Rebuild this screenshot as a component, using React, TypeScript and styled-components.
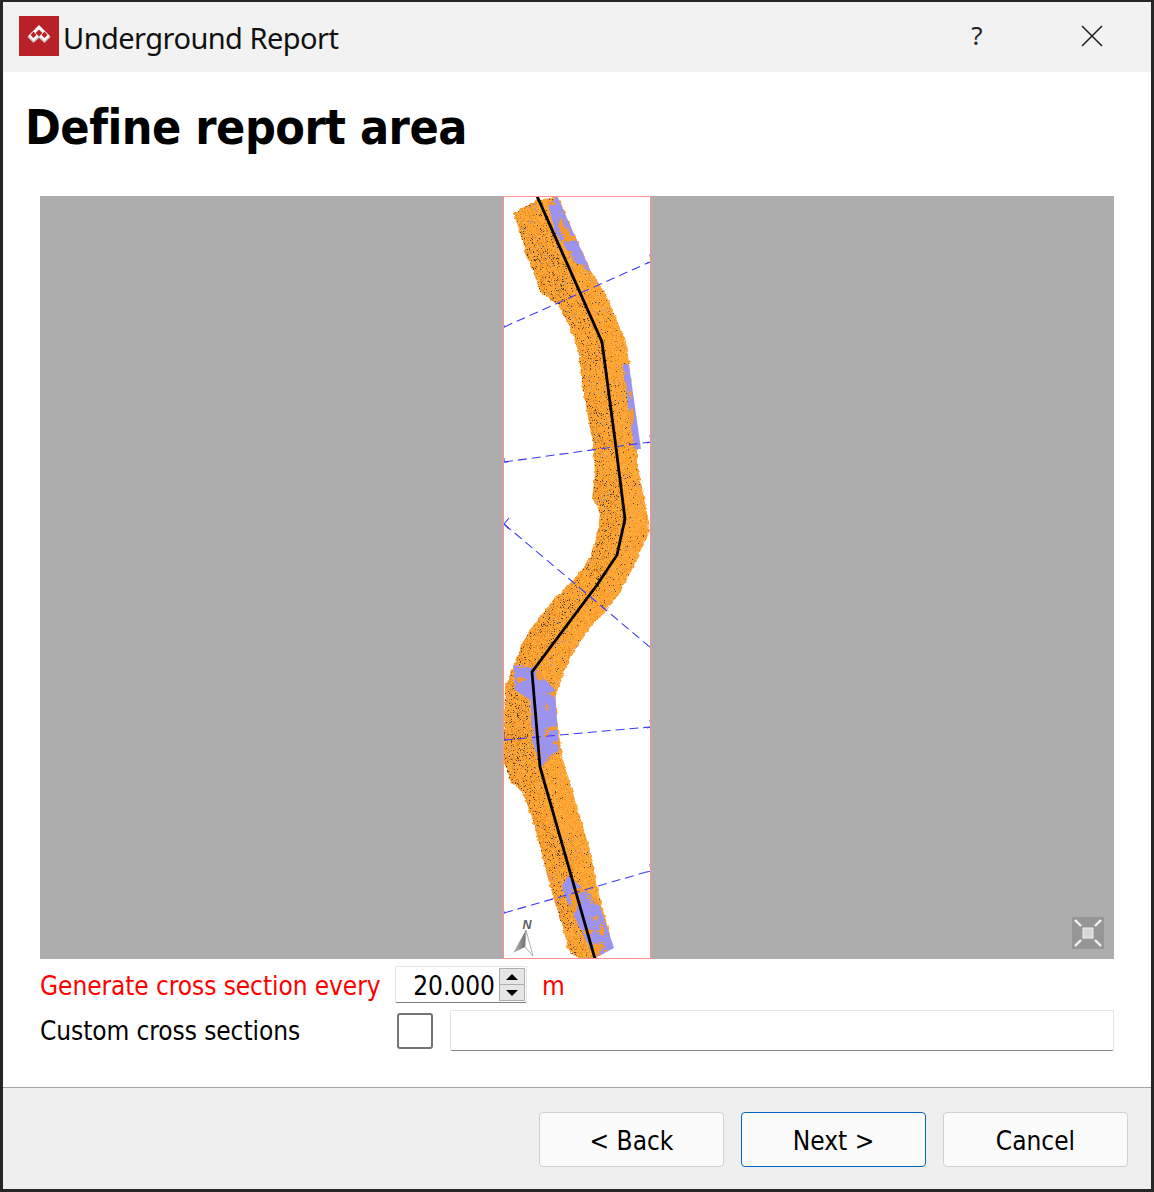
import React, { useMemo } from "react";
import styled, { createGlobalStyle } from "styled-components";

const Global = createGlobalStyle`
  html, body { margin: 0; padding: 0; background: #fff; }
  * { box-sizing: border-box; }
`;

const uiFont = `"Noto Sans", "Open Sans", "Liberation Sans", sans-serif`;
const bodyFont = `"DejaVu Sans Condensed", "DejaVu Sans", sans-serif`;

const Window = styled.div`
  width: 1154px; height: 1192px; border: 3px solid #262626; border-top-width: 2px;
  display: flex; flex-direction: column; background: #fff; font-family: ${uiFont}; color: #000;
`;
const TitleBar = styled.header`
  height: 70px; flex: none; background: #f2f2f2; display: flex; align-items: center; padding: 0 0 2px 16px;
`;
const TitleText = styled.div`
  font-size: 29px; margin-left: 4px; flex: 1; color: #111; letter-spacing: -0.55px; margin-top: 2px;
`;
const HelpMark = styled.div`
  width: 40px; text-align: center; font-size: 26px; color: #222; margin-right: 75px; margin-top: -2px;
`;
const CloseBox = styled.div`
  width: 40px; margin-right: 39px; display: flex; justify-content: center; margin-top: 0;
`;
const Heading = styled.h1`
  margin: 0; padding: 24px 0 0 22px; height: 124px; flex: none; font-size: 48px; font-weight: 700;
  line-height: 62px; letter-spacing: -0.5px; font-family: ${bodyFont}; font-stretch: condensed;
`;
const MapPanel = styled.div`
  position: relative; margin: 0 37px; height: 763px; flex: none; background: #adadad; display: flex; justify-content: center;
`;
const Canvas = styled.div`
  width: 148px; height: 763px; background: #fff; border: 1px solid #ff8f8f; overflow: hidden;
`;
const Drawing = styled.svg`
  display: block; width: 146px; height: 761px;
`;
const FitButton = styled.svg`
  position: absolute; right: 10px; bottom: 10px; width: 32px; height: 32px;
`;
const Form = styled.div`
  margin: 0 37px; height: 128px; flex: none; display: flex; flex-direction: column;
  font-family: ${bodyFont}; font-stretch: condensed;
`;
const SpinRow = styled.div`
  height: 51px; padding-top: 7px; display: flex; align-items: flex-start; font-size: 26px;
`;
const CustomRow = styled.div`
  display: flex; align-items: flex-start; font-size: 26px;
`;
const Label = styled.div<{ $red?: boolean }>`
  width: 355px; flex: none; line-height: 37px; letter-spacing: -0.07px; color: ${p => (p.$red ? "#ff0000" : "#000")};
  padding-top: ${p => (p.$red ? 2 : 3)}px;
`;
const Spin = styled.div`
  width: 132px; height: 37px; flex: none; background: #fff; border: 1px solid #e4e4e4; border-bottom: 1px solid #7c7c7c;
  border-radius: 2px; display: flex; align-items: center; justify-content: flex-end; padding-right: 1px;
`;
const SpinValue = styled.span`
  font-size: 26px; margin-right: 4px; line-height: 37px; padding-top: 3px;
`;
const SpinButtons = styled.div`
  width: 26px; height: 33px; display: flex; flex-direction: column;
`;
const SpinButton = styled.div`
  flex: 1; background: #e6e6e6; border: 1px solid #adadad; display: flex; align-items: center; justify-content: center;
  & + & { border-top: none; }
`;
const Tri = styled.i<{ $down?: boolean }>`
  width: 0; height: 0; border-left: 6px solid transparent; border-right: 6px solid transparent;
  ${p => (p.$down ? "border-top: 6px solid #000;" : "border-bottom: 6px solid #000;")}
`;
const Unit = styled.div`
  color: #ff0000; line-height: 37px; margin-left: 15px; padding-top: 2px;
`;
const Check = styled.div`
  width: 36px; height: 36px; flex: none; margin: 3px 17px 0 2px; border: 2px solid #757575; border-radius: 3px; background: #fff;
`;
const TextInput = styled.div`
  width: 664px; height: 41px; flex: none; background: #fff; border: 1px solid #e4e4e4; border-bottom: 1px solid #858585; border-radius: 2px;
`;
const Footer = styled.footer`
  flex: 1; background: #efefef; border-top: 1px solid #a3a3a3; display: flex; justify-content: flex-end;
  gap: 17px; padding: 24px 23px 0 0;
`;
const Button = styled.button<{ $primary?: boolean }>`
  width: 185px; height: 55px; background: #fbfbfb; border: 1px solid ${p => (p.$primary ? "#0067c0" : "#d1d1d1")};
  border-radius: 4px; font-family: ${bodyFont}; font-stretch: condensed; font-size: 26px; color: #000; padding: 3px 0 0;
`;

type P = [number, number];
const road: P[] = [[513,213],[520,233],[527,257],[532,268],[540,292],[558,305],[570,327],[578,350],[583,390],[588,417],[592,440],[595,473],[592,498],[600,513],[597,537],[588,562],[575,577],[553,600],[528,632],[517,657],[505,687],[503,760],[510,780],[523,793],[533,820],[550,887],[560,920],[570,953],[580,959],[595,959],[613,947],[597,887],[590,850],[563,760],[558,730],[555,697],[570,657],[590,627],[607,610],[620,592],[638,557],[650,528],[645,503],[637,463],[637,448],[627,343],[622,333],[607,297],[597,280],[590,270],[558,197],[537,200]];
const blues: P[][] = [
  [[557,196],[592,274],[575,262],[555,232],[548,205]],
  [[622,363],[629,365],[641,449],[634,449]],
  [[513,665],[533,666],[555,690],[559,750],[540,768],[532,740],[530,700],[515,690]],
  [[568,876],[598,900],[614,948],[595,958],[578,925],[561,887]],
];
const center: P[] = [[537,196],[602,342],[615,440],[625,519],[617,555],[597,585],[532,672],[540,767],[595,959]];
const toPts = (a: P[]) => a.map(p => p.join(",")).join(" ");
const inside = (x: number, y: number, poly: P[]) => {
  let c = false;
  for (let i = 0, j = poly.length - 1; i < poly.length; j = i++) {
    const [xi, yi] = poly[i], [xj, yj] = poly[j];
    if (yi > y !== yj > y && x < ((xj - xi) * (y - yi)) / (yj - yi) + xi) c = !c;
  }
  return c;
};
const centerX = (y: number) => {
  for (let i = 0; i < center.length - 1; i++) {
    const [x0, y0] = center[i], [x1, y1] = center[i + 1];
    if (y >= y0 && y <= y1) return x0 + ((x1 - x0) * (y - y0)) / (y1 - y0);
  }
  return 570;
};
const hash = (x: number, y: number) => {
  const v = Math.sin(x * 127.1 + y * 311.7) * 43758.5453;
  return v - Math.floor(v);
};
const noise = (x: number, y: number, g: number) => {
  const gx = Math.floor(x / g), gy = Math.floor(y / g);
  const fx = x / g - gx, fy = y / g - gy;
  const a = hash(gx, gy), b = hash(gx + 1, gy), c = hash(gx, gy + 1), d = hash(gx + 1, gy + 1);
  return (a * (1 - fx) + b * fx) * (1 - fy) + (c * (1 - fx) + d * fx) * fy;
};
const useSpeckles = () => useMemo(() => {
  const dark: string[] = [], mid: string[] = [], light: string[] = [], blue: string[] = [], orange: string[] = [];
  const rect = (x: number, y: number) => `M${x} ${y}h1v1h-1z`;
  for (let y = 196; y < 959; y++) {
    const cx = centerX(y);
    for (let x = 503; x < 651; x++) {
      if (!inside(x, y, road)) continue;
      const t = hash(x + 0.37, y + 0.73);
      const inBlue = blues.some(b => inside(x, y, b));
      if (inBlue) {
        const n = noise(x, y, 7);
        if (n > 0.74 || (n > 0.64 && t < 0.4) || t < 0.02) orange.push(rect(x, y));
        continue;
      }
      const d = x - cx;
      const rough = d < 2 ? 1 : 0.35;
      const n = 0.4 + noise(x, y, 13);
      if (t < 0.05 * rough * n) dark.push(rect(x, y));
      else if (t < 0.2 * rough * n) mid.push(rect(x, y));
      else if (t < 0.5) light.push(rect(x, y));
      else if (t < 0.52 && noise(x, y, 9) > 0.55) blue.push(rect(x, y));
    }
  }
  return { dark: dark.join(""), mid: mid.join(""), light: light.join(""), blue: blue.join(""), orange: orange.join("") };
}, []);

const cuts: { a: P; b: P; ticks: string }[] = [
  { a: [504,327], b: [650,262], ticks: "M650 254l1 8l-4 1M504 325v3" },
  { a: [504,462], b: [650,442], ticks: "M650 435l1 7l-4 1M504 458v4h4" },
  { a: [504,524], b: [651,648], ticks: "M509 518l-5 6l5 5M651 644v4" },
  { a: [504,740], b: [650,727], ticks: "M650 720l1 7l-4 1M504 733v7h4" },
  { a: [504,913], b: [650,871], ticks: "M650 864l1 7l-4 1M504 911v3" },
];

const Map = () => {
  const sp = useSpeckles();
  return (
    <Drawing viewBox="504 197 146 761">
      <defs>
        <filter id="rough" x="480" y="180" width="200" height="800" filterUnits="userSpaceOnUse">
          <feTurbulence type="fractalNoise" baseFrequency="0.2" numOctaves="2" seed="4" />
          <feDisplacementMap in="SourceGraphic" scale="5" xChannelSelector="R" yChannelSelector="G" />
        </filter>
        <filter id="soft" x="480" y="180" width="200" height="800" filterUnits="userSpaceOnUse">
          <feGaussianBlur stdDeviation="0.45" />
        </filter>
        <clipPath id="roadClip"><polygon points={toPts(road)} /></clipPath>
        <linearGradient id="northFill" x1="0" y1="0" x2="1" y2="0.2">
          <stop offset="0" stopColor="#d4d4d4" />
          <stop offset="1" stopColor="#6f6f6f" />
        </linearGradient>
      </defs>
      <g filter="url(#rough)">
        <polygon points={toPts(road)} fill="#fb9e2f" />
      </g>
      <g filter="url(#soft)">
        {blues.map((b, i) => <polygon key={i} points={toPts(b)} fill="#9a93ef" />)}
        <g clipPath="url(#roadClip)">
          <path d={sp.light} fill="#ffad3c" />
          <path d={sp.mid} fill="#d0822a" />
          <path d={sp.dark} fill="#5a3c14" />
          <path d={sp.blue} fill="#8f8cd8" />
          <path d={sp.orange} fill="#f79a2e" />
        </g>
      </g>
      {cuts.map((c, i) => (
        <g key={i} fill="none" stroke="#3a3aff" strokeWidth="1.1">
          <line x1={c.a[0]} y1={c.a[1]} x2={c.b[0]} y2={c.b[1]} strokeDasharray="9 5" />
          <path d={c.ticks} />
        </g>
      ))}
      <polyline points={toPts(center)} fill="none" stroke="#000" strokeWidth="2.8" strokeLinejoin="miter" />
      <text x="522.5" y="929" fontFamily="'Liberation Sans', sans-serif" fontSize="12.5" fontWeight="700" fontStyle="italic" fill="#5e5e5e">N</text>
      <polygon points="513,953 526,930 525,947" fill="url(#northFill)" />
      <polygon points="526,930 533,956 525,947" fill="#fff" stroke="#8f8f8f" strokeWidth="0.7" />
    </Drawing>
  );
};

const Logo = () => (
  <svg width="40" height="40" viewBox="0 0 40 40">
    <rect width="40" height="40" fill="#b72127" />
    <path d="M20 9L31 20L25.5 26L20 21L14.5 26L9 20Z" fill="#fff" />
    <path d="M20 13.5L23.5 17L20 20.5L16.5 17Z" fill="#b72127" />
    <path d="M14.5 15.5L17.5 19L14.5 22L11.5 19Z" fill="#b72127" />
    <path d="M25.5 15.5L28.5 19L25.5 22L22.5 19Z" fill="#b72127" />
    <path d="M9 20.5L14.5 26L20 21L25.5 26L31 20.5" fill="none" stroke="#c9c9c9" strokeWidth="1.6" />
  </svg>
);

export default function App() {
  return (
    <>
      <Global />
      <Window>
        <TitleBar>
          <Logo />
          <TitleText>Underground Report</TitleText>
          <HelpMark>?</HelpMark>
          <CloseBox>
            <svg width="22" height="22" viewBox="0 0 22 22" fill="none" stroke="#222" strokeWidth="1.6">
              <path d="M1 1L21 21M21 1L1 21" />
            </svg>
          </CloseBox>
        </TitleBar>
        <Heading>Define report area</Heading>
        <MapPanel>
          <Canvas><Map /></Canvas>
          <FitButton viewBox="0 0 32 32">
            <rect width="32" height="32" fill="#969696" />
            <rect x="11" y="11" width="10" height="10" fill="#d8d8d8" stroke="#efefef" />
            <path d="M3 3L9 9M29 3L23 9M3 29L9 23M29 29L23 23" stroke="#f4f4f4" strokeWidth="2.4" fill="none" />
          </FitButton>
        </MapPanel>
        <Form>
          <SpinRow>
            <Label $red>Generate cross section every</Label>
            <Spin>
              <SpinValue>20.000</SpinValue>
              <SpinButtons>
                <SpinButton><Tri /></SpinButton>
                <SpinButton><Tri $down /></SpinButton>
              </SpinButtons>
            </Spin>
            <Unit>m</Unit>
          </SpinRow>
          <CustomRow>
            <Label>Custom cross sections</Label>
            <Check />
            <TextInput />
          </CustomRow>
        </Form>
        <Footer>
          <Button>&lt; Back</Button>
          <Button $primary>Next &gt;</Button>
          <Button>Cancel</Button>
        </Footer>
      </Window>
    </>
  );
}
